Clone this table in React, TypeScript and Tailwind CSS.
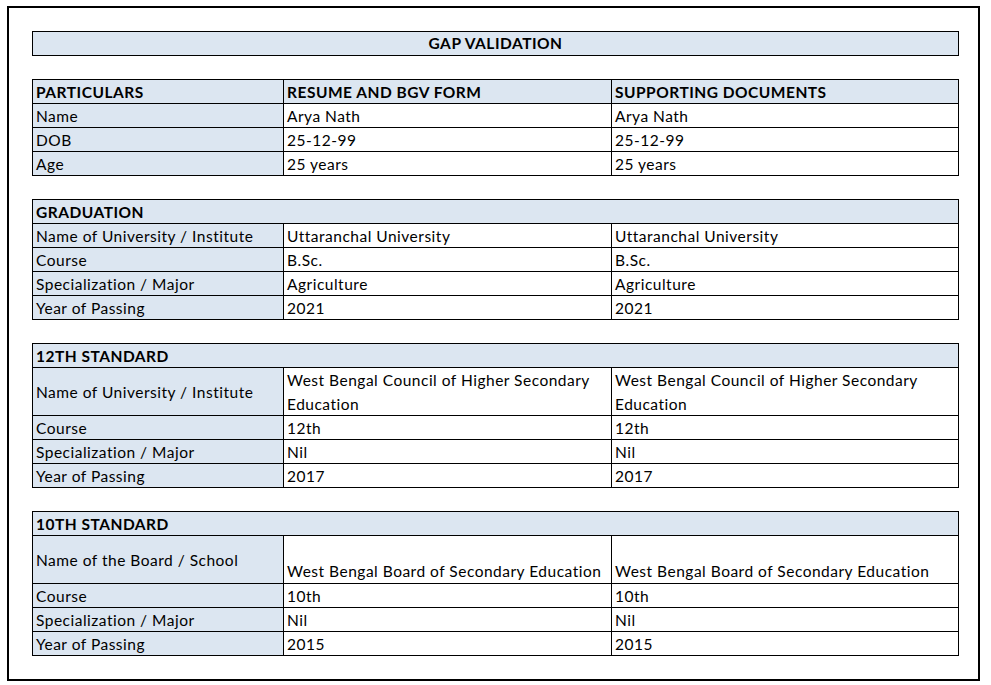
import React from 'react';

type Row = { label: string; a: string; b: string; tall?: 'wrap' | 'bottom' };

const sections: { title: string; rows: Row[] }[] = [
  {
    title: 'GRADUATION',
    rows: [
      { label: 'Name of University / Institute', a: 'Uttaranchal University', b: 'Uttaranchal University' },
      { label: 'Course', a: 'B.Sc.', b: 'B.Sc.' },
      { label: 'Specialization / Major', a: 'Agriculture', b: 'Agriculture' },
      { label: 'Year of Passing', a: '2021', b: '2021' },
    ],
  },
  {
    title: '12TH STANDARD',
    rows: [
      {
        label: 'Name of University / Institute',
        a: 'West Bengal Council of Higher Secondary Education',
        b: 'West Bengal Council of Higher Secondary Education',
        tall: 'wrap',
      },
      { label: 'Course', a: '12th', b: '12th' },
      { label: 'Specialization / Major', a: 'Nil', b: 'Nil' },
      { label: 'Year of Passing', a: '2017', b: '2017' },
    ],
  },
  {
    title: '10TH STANDARD',
    rows: [
      {
        label: 'Name of the Board / School',
        a: 'West Bengal Board of Secondary Education',
        b: 'West Bengal Board of Secondary Education',
        tall: 'bottom',
      },
      { label: 'Course', a: '10th', b: '10th' },
      { label: 'Specialization / Major', a: 'Nil', b: 'Nil' },
      { label: 'Year of Passing', a: '2015', b: '2015' },
    ],
  },
];

const cell = 'border-r border-b border-black px-[3px] leading-[24px] whitespace-nowrap overflow-hidden';

const DataRow = ({ row }: { row: Row }) => {
  if (row.tall === 'wrap') {
    return (
      <>
        <div className={`${cell} h-[48px] bg-[#dce6f1] flex items-center`}>{row.label}</div>
        <div className={`${cell} h-[48px] !whitespace-normal pr-[20px]`}>{row.a}</div>
        <div className={`${cell} h-[48px] !whitespace-normal pr-[30px]`}>{row.b}</div>
      </>
    );
  }
  if (row.tall === 'bottom') {
    return (
      <>
        <div className={`${cell} h-[48px] bg-[#dce6f1] flex items-center`}>{row.label}</div>
        <div className={`${cell} h-[48px] flex items-end`}>{row.a}</div>
        <div className={`${cell} h-[48px] flex items-end`}>{row.b}</div>
      </>
    );
  }
  return (
    <>
      <div className={`${cell} h-[24px] bg-[#dce6f1]`}>{row.label}</div>
      <div className={`${cell} h-[24px]`}>{row.a}</div>
      <div className={`${cell} h-[24px]`}>{row.b}</div>
    </>
  );
};

export default function App() {
  return (
    <div className="bg-white w-[991px] h-[685px] pt-[6px] pl-[7px] text-black text-[15.5px] tracking-[0.5px] font-['Lato','Liberation_Sans',sans-serif]">
      <div className="w-[973px] h-[675px] border-2 border-black pl-[23px] pt-[23px]">
        <div className="w-[927px] h-[25px] border border-black bg-[#dce6f1] font-bold text-center leading-[23px]">
          GAP VALIDATION
        </div>

        <div className="mt-[23px] w-[927px] grid grid-cols-[251px_328px_347px] border-l border-t border-black">
          <div className={`${cell} h-[24px] bg-[#dce6f1] font-bold`}>PARTICULARS</div>
          <div className={`${cell} h-[24px] bg-[#dce6f1] font-bold`}>RESUME AND BGV FORM</div>
          <div className={`${cell} h-[24px] bg-[#dce6f1] font-bold`}>SUPPORTING DOCUMENTS</div>
          <DataRow row={{ label: 'Name', a: 'Arya Nath', b: 'Arya Nath' }} />
          <DataRow row={{ label: 'DOB', a: '25-12-99', b: '25-12-99' }} />
          <DataRow row={{ label: 'Age', a: '25 years', b: '25 years' }} />
        </div>

        {sections.map((s) => (
          <div
            key={s.title}
            className="mt-[23px] w-[927px] grid grid-cols-[251px_328px_347px] border-l border-t border-black"
          >
            <div className={`${cell} col-span-3 h-[24px] bg-[#dce6f1] font-bold`}>{s.title}</div>
            {s.rows.map((r, i) => (
              <DataRow key={i} row={r} />
            ))}
          </div>
        ))}
      </div>
    </div>
  );
}
